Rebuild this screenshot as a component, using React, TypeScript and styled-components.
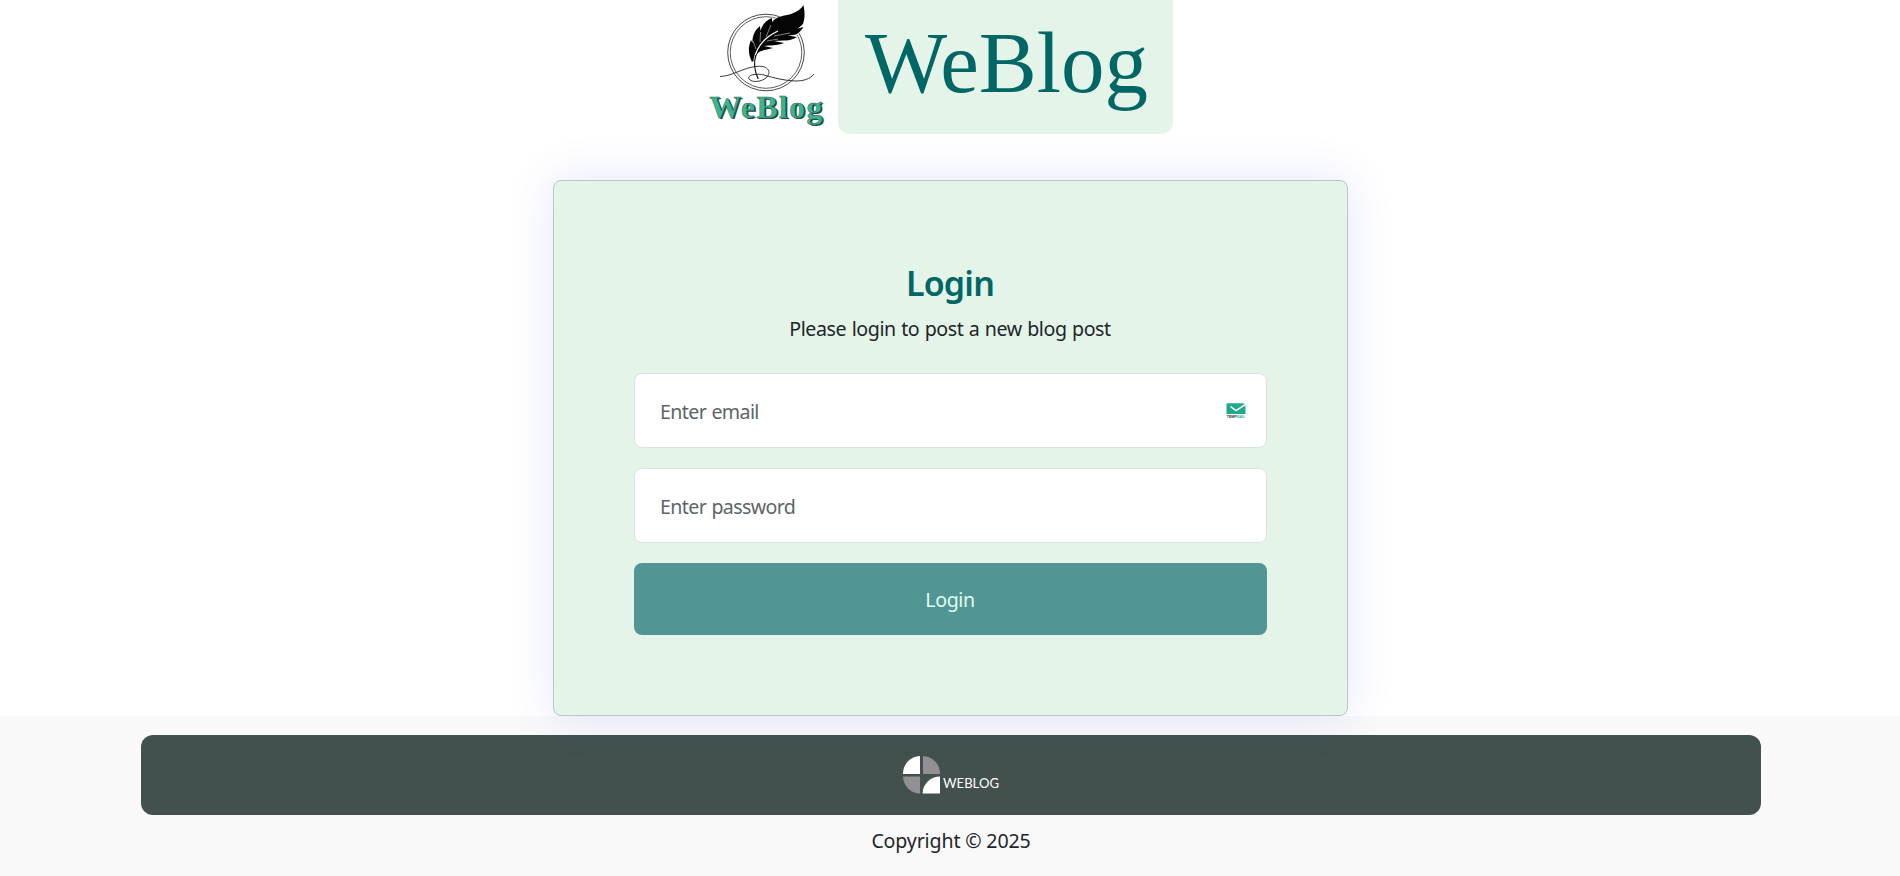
import React from "react";
import styled, { createGlobalStyle } from "styled-components";

const GlobalStyle = createGlobalStyle`
  * { box-sizing: border-box; }
  body {
    margin: 0;
    background: #fff;
    color: #212529;
    font-family: "Segoe UI", "Noto Sans", sans-serif;
    font-size: 19.6px;
    line-height: 30px;
    overflow: hidden;
  }
  h1, h2, p { margin: 0; }
`;

const Page = styled.div`
  min-height: 876px;
  display: flex;
  flex-direction: column;
  align-items: center;
`;

const Header = styled.header`
  height: 180px;
  display: flex;
  align-items: flex-start;
  padding-right: 37px;
`;

const QuillLogo = styled.svg`
  width: 148px;
  height: 134px;
  flex: none;
`;

const Title = styled.h1`
  width: 335px;
  height: 134px;
  padding-left: 2px;
  border-radius: 0 0 12px 12px;
  background: #e4f4e8;
  color: #006666;
  font: 400 87px/126px "Times New Roman", "Liberation Serif", serif;
  text-align: center;
`;

const Card = styled.main`
  position: relative;
  z-index: 1;
  width: 795px;
  height: 536px;
  padding: 79px 80px;
  border: 1px solid #b8c8c4;
  border-radius: 8px;
  background: #e4f4e8;
  box-shadow: 0 0 46px rgba(60, 80, 255, 0.14);
  text-align: center;
`;

const CardTitle = styled.h2`
  color: #006666;
  font-size: 34px;
  font-weight: 600;
  line-height: 46px;
  letter-spacing: -0.8px;
`;

const Intro = styled.p`
  margin: 8px 0 29px;
  line-height: 30px;
  letter-spacing: -0.4px;
  word-spacing: 0.7px;
`;

const Form = styled.form`
  display: flex;
  flex-direction: column;
  gap: 20px;
`;

const Field = styled.label`
  display: flex;
  align-items: center;
  height: 75px;
  padding: 0 20px 0 25px;
  border: 1px solid #dbe3e0;
  border-radius: 8px;
  background: #fff;
`;

const Input = styled.input`
  flex: 1;
  height: 40px;
  padding: 2px 0 0 0.6px;
  border: 0;
  outline: 0;
  background: none;
  font: inherit;
  letter-spacing: -0.62px;
  word-spacing: 0.7px;
  &::placeholder { color: #5d6469; opacity: 1; }
`;

const MailIcon = styled.svg`
  width: 20px;
  height: 16px;
  flex: none;
`;

const Submit = styled.button`
  height: 72px;
  padding: 2px 0 0;
  border: 0;
  border-radius: 8px;
  background: #519694;
  color: #e0fcf0;
  font: inherit;
  letter-spacing: -0.4px;
`;

const Footer = styled.footer`
  width: 100%;
  height: 160px;
  padding: 19px 139px 0 141px;
  background: #f9f9f9;
  text-align: center;
`;

const FooterBar = styled.div`
  height: 80px;
  display: flex;
  align-items: center;
  justify-content: center;
  border-radius: 12px;
  background: #42514d;
`;

const BrandMark = styled.svg`
  width: 98px;
  height: 38px;
  margin-left: 2px;
  overflow: visible;
`;

const Copyright = styled.p`
  margin-top: 11px;
  letter-spacing: -0.15px;
`;

const Quill = () => (
  <QuillLogo viewBox="0 0 148 134" role="img" aria-label="WeBlog logo">
    <g fill="none" stroke="#333">
      <circle cx="76" cy="52.5" r="38.3" strokeWidth="0.9" />
      <circle cx="76" cy="52.5" r="35.8" strokeWidth="0.8" />
    </g>
    <path
      d="M62 62C58 54 58 47 61 40L62.500 43C62 36 65 30 70 26L70.500 31C72 25 76 20 82 18L82 22C87 16 94 16 101 14C108 11 111 9 113.500 5C115 13 115 18 113 24L108 28.500L113.500 27C111 31 108 34 104 35L98 35.500L107 37C100 42 92 40 84 41L94 43C87 46 80 45 74 46L83 48C77 50 71 50 68 53C65.500 56 65 60 62 62Z"
      fill="#050505"
      stroke="#fff"
      strokeWidth="1.2"
      paintOrder="stroke"
    />
    <path d="M64 60C66 49 73 38 88 31" fill="none" stroke="#fff" strokeWidth="1.3" />
    <path d="M66 49L63 41M70 42L70.500 32M76 37L81 25M84 36L100 33M77 41L88 39" stroke="#fff" strokeWidth="0.5" />
    <path d="M68.300 79C64 70 63.500 62 66 55" fill="none" stroke="#111" strokeWidth="1.2" />
    <path
      d="M30 76.500C43 76 52 68 66 66.500C77 65 82 71 77 77C72 82 62 83 59 79C57 75 66 73 74 75C84 78 94 80.500 105 81C114 81 120 79 124 74"
      fill="none"
      stroke="#222"
      strokeWidth="0.9"
    />
    <g fontFamily="Liberation Serif" fontSize="32" fontWeight="700" strokeLinejoin="round">
      <text x="21" y="118.500" textLength="113" lengthAdjust="spacing" fill="#234840">WeBlog</text>
      <text x="19.500" y="118" textLength="113" lengthAdjust="spacing" fill="#35b791" stroke="#39534c" strokeWidth="0.5">WeBlog</text>
    </g>
  </QuillLogo>
);

const TempMail = () => (
  <MailIcon viewBox="0 0 20 16" aria-hidden="true">
    <path d="M1 .3H17L19.500 1.500V11H.5V1Z" fill="#20a98a" />
    <path d="M4.500 3.500L10 7.700L20 1" fill="none" stroke="#fff" strokeWidth="1.5" />
    <text x=".8" y="15.300" fontFamily="Liberation Sans" fontWeight="700" fontSize="4" textLength="18.400" lengthAdjust="spacingAndGlyphs" fill="#21343a">
      TEMP<tspan fill="#35b69b">MAIL</tspan>
    </text>
  </MailIcon>
);

const Brand = () => (
  <BrandMark viewBox="0 0 98 38" role="img" aria-label="Weblog">
    <path d="M17 18H0A17.500 17.500 0 0 1 17 0Z" fill="#fff" />
    <path d="M20 0A17.500 17.500 0 0 1 37 18H20Z" fill="#929094" />
    <path d="M0 20.500H17V37.500A17.500 17.500 0 0 1 0 20.500Z" fill="#929094" />
    <path d="M37 20.500V37.500H19.500A17.500 17.500 0 0 1 37 20.500Z" fill="#fff" />
    <text x="40" y="32" fontFamily="Lato" fontSize="14" textLength="56" lengthAdjust="spacingAndGlyphs" fill="#fff">WEBLOG</text>
  </BrandMark>
);

export default function App() {
  return (
    <>
      <GlobalStyle />
      <Page>
        <Header>
          <Quill />
          <Title>WeBlog</Title>
        </Header>
        <Card>
          <CardTitle>Login</CardTitle>
          <Intro>Please login to post a new blog post</Intro>
          <Form>
            <Field>
              <Input type="email" placeholder="Enter email" />
              <TempMail />
            </Field>
            <Field>
              <Input type="password" placeholder="Enter password" />
            </Field>
            <Submit type="button">Login</Submit>
          </Form>
        </Card>
        <Footer>
          <FooterBar><Brand /></FooterBar>
          <Copyright>Copyright © 2025</Copyright>
        </Footer>
      </Page>
    </>
  );
}
